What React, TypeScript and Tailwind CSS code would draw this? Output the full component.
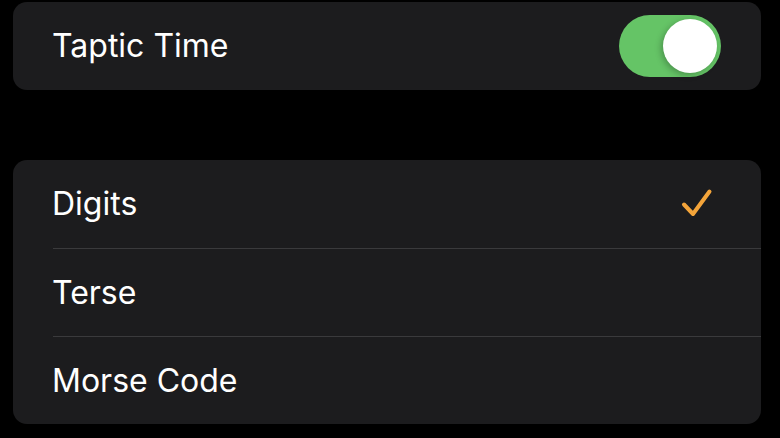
import React from 'react';

const options = ['Digits', 'Terse', 'Morse Code'];

function Toggle({ on }: { on: boolean }) {
  return (
    <div
      className={`flex h-[62px] w-[102px] items-center rounded-full px-[4px] ${
        on ? 'justify-end bg-[#65c466]' : 'justify-start bg-[#39393d]'
      }`}
    >
      <div className="h-[54px] w-[54px] rounded-full bg-white shadow-[-2px_2px_6px_rgba(0,0,0,0.25)]" />
    </div>
  );
}

function Check() {
  return (
    <svg width="32" height="32" viewBox="0 0 32 32" fill="none">
      <path
        d="M3 16.5 L12 26 L28.5 3.5"
        stroke="#f3a43a"
        strokeWidth="4"
        strokeLinecap="round"
        strokeLinejoin="round"
      />
    </svg>
  );
}

export default function App() {
  const selected = 'Digits';

  return (
    <div
      className="h-[438px] w-[780px] overflow-hidden bg-black pl-[13px] pr-[19px] pt-[2px] text-white"
      style={{ fontFamily: 'Inter, "Noto Sans", sans-serif' }}
    >
      <div className="flex h-[88px] items-center justify-between rounded-[14px] bg-[#1c1c1e] pl-[39px] pr-[40px]">
        <span className="text-[32px]">Taptic Time</span>
        <Toggle on />
      </div>

      <div className="mt-[70px] overflow-hidden rounded-[14px] bg-[#1c1c1e]">
        {options.map((opt, i) => (
          <div key={opt} className="pl-[40px]">
            <div
              className={`flex h-[88px] items-center justify-between pr-[48px] ${
                i > 0 ? 'border-t border-[#3a3a3c]' : ''
              }`}
            >
              <span className="-ml-[1px] text-[32px]">{opt}</span>
              {opt === selected && <Check />}
            </div>
          </div>
        ))}
      </div>
    </div>
  );
}
